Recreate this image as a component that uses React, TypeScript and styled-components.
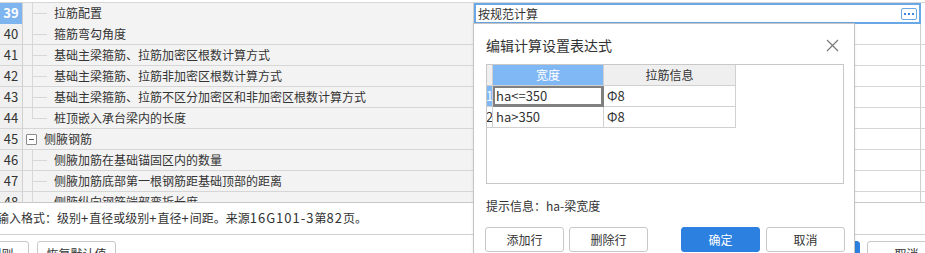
import React from 'react';
import styled, { createGlobalStyle, css } from 'styled-components';

const Global = createGlobalStyle`
  html, body { margin: 0; padding: 0; background: #fff; overflow: hidden; }
  body {
    font-family: "Noto Sans CJK SC", "Microsoft YaHei", sans-serif;
    color: #333;
    font-size: 12px;
  }
  * { box-sizing: border-box; }
`;

const Page = styled.div`
  position: relative;
  width: 925px;
  height: 253px;
  overflow: hidden;
  background: #fff;
`;

const Grid = styled.div`
  margin-top: 2px;
  height: 201px;
  overflow: hidden;
  border-top: 1px solid #d6d6d6;
  border-bottom: 1px solid #c8c8c8;
  display: flex;
  flex-direction: column;
`;

const Row = styled.div`
  display: grid;
  grid-template-columns: 23px 451px 447px 1fr;
  height: 21px;
  flex: none;
`;

const NumCell = styled.div<{ $active?: boolean }>`
  border-right: 1px solid #d0d0d0;
  border-bottom: 1px solid #d6d6d6;
  background: ${(p) => (p.$active ? '#7fb5ee' : '#f0f0f0')};
  color: ${(p) => (p.$active ? '#fff' : '#333')};
  font-weight: ${(p) => (p.$active ? 700 : 400)};
  font-size: 13px;
  line-height: 20px;
  text-align: center;
`;

const NameCell = styled.div`
  border-right: 1px solid #cfcfcf;
  border-bottom: 1px solid #d6d6d6;
  background: #f3f3f3;
  display: flex;
  align-items: stretch;
  line-height: 20px;
  white-space: nowrap;
  overflow: hidden;
`;

const Connector = styled.span<{ $last?: boolean }>`
  position: relative;
  flex: none;
  width: 15px;
  margin-left: 9px;
  margin-right: 7px;
  &::before {
    content: '';
    position: absolute;
    left: 0;
    top: -1px;
    height: ${(p) => (p.$last ? '11px' : '22px')};
    border-left: 1px solid #d8d8d8;
  }
  &::after {
    content: '';
    position: absolute;
    left: 0;
    right: 0;
    top: 10px;
    border-top: 1px solid #d8d8d8;
  }
`;

const Toggle = styled.span`
  flex: none;
  align-self: center;
  width: 11px;
  height: 11px;
  margin-left: 3px;
  margin-right: 7px;
  border: 1px solid #8a8a8a;
  border-radius: 1px;
  background: #fff;
  display: flex;
  align-items: center;
  justify-content: center;
  &::after {
    content: '';
    width: 5px;
    border-top: 1px solid #555;
  }
`;

const ValueCell = styled.div`
  border-right: 1px solid #cfcfcf;
  border-bottom: 1px solid #d6d6d6;
  background: #fff;
`;

const RestCell = styled.div`
  border-bottom: 1px solid #d6d6d6;
  background: #fff;
`;

const ActiveInput = styled.div`
  height: 21px;
  margin-right: -1px;
  border: 2px solid #6aa7e6;
  background: #fff;
  display: flex;
  align-items: center;
  justify-content: space-between;
  padding: 0 2px 0 2px;
  line-height: 17px;
  position: relative;
  z-index: 1;
`;

const DotsButton = styled.span`
  width: 16px;
  height: 12px;
  border: 1px solid #6aa7e6;
  border-radius: 2px;
  display: flex;
  align-items: center;
  justify-content: center;
  gap: 2px;
  span {
    width: 2px;
    height: 2px;
    background: #3c86e0;
  }
`;

const BottomPanel = styled.div`
  display: flex;
  flex-direction: column;
`;

const InfoLine = styled.div`
  height: 32px;
  line-height: 30px;
  white-space: nowrap;
  margin-left: -3px;
  border-bottom: 1px solid #d0d0d0;
`;

const Latin = styled.span`
  font-size: 13px;
  letter-spacing: 1px;
`;

const ButtonBar = styled.div`
  margin-left: -50px;
  width: 996px;
  padding-top: 6px;
  display: flex;
  justify-content: space-between;
`;

const Group = styled.div<{ $gap: number }>`
  display: flex;
  gap: ${(p) => p.$gap}px;
`;

const Button = styled.button<{ $primary?: boolean }>`
  width: 79px;
  height: 25px;
  border-radius: 3px;
  font-family: inherit;
  font-size: 12px;
  padding: 0;
  line-height: 23px;
  cursor: pointer;
  ${(p) =>
    p.$primary
      ? css`
          background: #2c80e0;
          border: 1px solid #2c80e0;
          color: #fff;
        `
      : css`
          background: #fff;
          border: 1px solid #c8c8c8;
          color: #333;
        `}
`;

const Dialog = styled.div`
  position: absolute;
  left: 473px;
  top: 23px;
  width: 382px;
  height: 240px;
  background: #fff;
  border: 1px solid #c4c4c4;
  box-shadow: 0 0 3px rgba(0, 0, 0, 0.08);
  padding: 11px 10px 0 12px;
  display: flex;
  flex-direction: column;
  z-index: 2;
`;

const TitleBar = styled.div`
  display: flex;
  align-items: center;
  justify-content: space-between;
  height: 20px;
`;

const Title = styled.div`
  font-size: 14px;
  line-height: 20px;
  color: #333;
`;

const Close = styled.span`
  width: 13px;
  height: 13px;
  margin-right: 5px;
  display: flex;
`;

const TableBox = styled.div`
  margin-top: 9px;
  height: 120px;
  border: 1px solid #c8c8c8;
  display: flex;
  flex-direction: column;
`;

const TRow = styled.div`
  display: grid;
  grid-template-columns: 6px 111px 132px;
  height: 21px;
`;

const HeadCell = styled.div<{ $active?: boolean }>`
  border-right: 1px solid #d0d0d0;
  border-bottom: 1px solid #d0d0d0;
  background: ${(p) => (p.$active ? '#7fb8f5' : '#efefef')};
  color: ${(p) => (p.$active ? '#fff' : '#333')};
  text-align: center;
  line-height: 20px;
  font-size: 12px;
`;

const RowHead = styled.div<{ $active?: boolean }>`
  border-right: 1px solid #d0d0d0;
  border-bottom: 1px solid #d0d0d0;
  background: ${(p) => (p.$active ? '#7fb8f5' : '#fff')};
  color: ${(p) => (p.$active ? '#fff' : '#333')};
  font-size: 13px;
  line-height: 20px;
  overflow: hidden;
  text-indent: -1px;
`;

const DataCell = styled.div<{ $selected?: boolean }>`
  border-right: 1px solid #d0d0d0;
  border-bottom: 1px solid #d0d0d0;
  background: #fff;
  font-size: 13px;
  line-height: 20px;
  padding-left: 3px;
  white-space: nowrap;
  ${(p) =>
    p.$selected &&
    css`
      box-shadow: inset 0 0 0 2px #808080;
      border-color: #808080;
    `}
`;

const Hint = styled.div`
  margin-top: 13px;
  line-height: 18px;
  font-size: 12px;
`;

const DialogButtons = styled.div`
  margin-top: 12px;
  margin-left: -1px;
  width: 360px;
  display: flex;
  justify-content: space-between;
`;

type Item = { n: number; name: string; kind: 'child' | 'last' | 'group' };

const items: Item[] = [
  { n: 39, name: '拉筋配置', kind: 'child' },
  { n: 40, name: '箍筋弯勾角度', kind: 'child' },
  { n: 41, name: '基础主梁箍筋、拉筋加密区根数计算方式', kind: 'child' },
  { n: 42, name: '基础主梁箍筋、拉筋非加密区根数计算方式', kind: 'child' },
  { n: 43, name: '基础主梁箍筋、拉筋不区分加密区和非加密区根数计算方式', kind: 'child' },
  { n: 44, name: '桩顶嵌入承台梁内的长度', kind: 'last' },
  { n: 45, name: '侧腋钢筋', kind: 'group' },
  { n: 46, name: '侧腋加筋在基础锚固区内的数量', kind: 'child' },
  { n: 47, name: '侧腋加筋底部第一根钢筋距基础顶部的距离', kind: 'child' },
  { n: 48, name: '侧腋纵向钢筋端部弯折长度', kind: 'child' },
];

export default function App() {
  return (
    <Page>
      <Global />
      <Grid>
        {items.map((it) => (
          <Row key={it.n}>
            <NumCell $active={it.n === 39}>{it.n}</NumCell>
            <NameCell>
              {it.kind === 'group' ? <Toggle /> : <Connector $last={it.kind === 'last'} />}
              <span>{it.name}</span>
            </NameCell>
            <ValueCell>
              {it.n === 39 && (
                <ActiveInput>
                  <span>按规范计算</span>
                  <DotsButton>
                    <span />
                    <span />
                    <span />
                  </DotsButton>
                </ActiveInput>
              )}
            </ValueCell>
            <RestCell />
          </Row>
        ))}
      </Grid>
      <BottomPanel>
        <InfoLine>
          输入格式：级别<Latin>+</Latin>直径或级别<Latin>+</Latin>直径<Latin>+</Latin>间距。来源
          <Latin>16G101-3</Latin>第<Latin>82</Latin>页。
        </InfoLine>
        <ButtonBar>
          <Group $gap={8}>
            <Button>导出规则</Button>
            <Button>恢复默认值</Button>
          </Group>
          <Group $gap={7}>
            <Button $primary>确定</Button>
            <Button>取消</Button>
          </Group>
        </ButtonBar>
      </BottomPanel>

      <Dialog>
        <TitleBar>
          <Title>编辑计算设置表达式</Title>
          <Close>
            <svg width="13" height="13" viewBox="0 0 13 13">
              <path d="M1 1 L12 12 M12 1 L1 12" stroke="#7a7a7a" strokeWidth="1.2" fill="none" />
            </svg>
          </Close>
        </TitleBar>
        <TableBox>
          <TRow>
            <HeadCell />
            <HeadCell $active>宽度</HeadCell>
            <HeadCell>拉筋信息</HeadCell>
          </TRow>
          <TRow>
            <RowHead $active>1</RowHead>
            <DataCell $selected>ha&lt;=350</DataCell>
            <DataCell>Φ8</DataCell>
          </TRow>
          <TRow>
            <RowHead>2</RowHead>
            <DataCell>ha&gt;350</DataCell>
            <DataCell>Φ8</DataCell>
          </TRow>
        </TableBox>
        <Hint>提示信息：ha-梁宽度</Hint>
        <DialogButtons>
          <Group $gap={5}>
            <Button>添加行</Button>
            <Button>删除行</Button>
          </Group>
          <Group $gap={6}>
            <Button $primary>确定</Button>
            <Button>取消</Button>
          </Group>
        </DialogButtons>
      </Dialog>
    </Page>
  );
}
